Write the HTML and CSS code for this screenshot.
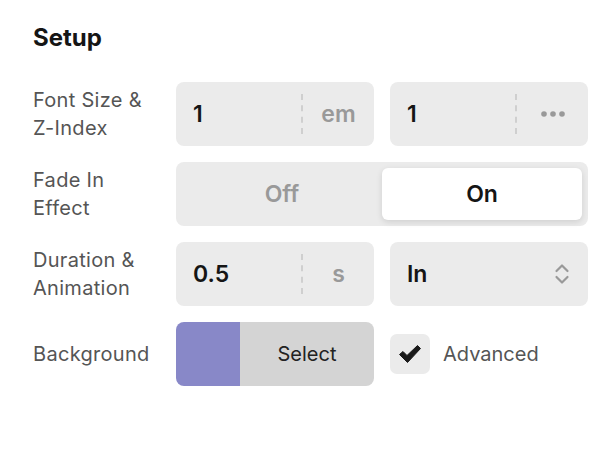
FILE: index.html
```html
<!DOCTYPE html>
<html lang="en">
<head>
<meta charset="utf-8">
<title>Setup</title>
<link rel="stylesheet" href="styles.css">
</head>
<body>
<section class="panel">
  <h2 class="title">Setup</h2>
  <div class="grid">
    <div class="label">Font Size &amp;<br>Z-Index</div>
    <div class="field">
      <span class="value">1</span>
      <span class="unit">em</span>
    </div>
    <div class="field">
      <span class="value">1</span>
      <span class="unit">
        <svg width="24" height="6" viewBox="0 0 24 6"><circle cx="3" cy="3" r="2.8" fill="#999"/><circle cx="12" cy="3" r="2.8" fill="#999"/><circle cx="21" cy="3" r="2.8" fill="#999"/></svg>
      </span>
    </div>

    <div class="label">Fade In<br>Effect</div>
    <div class="toggle span2">
      <span class="opt">Off</span>
      <span class="opt active">On</span>
    </div>

    <div class="label">Duration &amp;<br>Animation</div>
    <div class="field">
      <span class="value">0.5</span>
      <span class="unit">s</span>
    </div>
    <div class="field select">
      <span class="value">In</span>
      <svg class="chev" width="16" height="24" viewBox="0 0 16 24"><path d="M2.5 9 L8 3.5 L13.5 9 M2.5 15 L8 20.5 L13.5 15" fill="none" stroke="#999" stroke-width="2.2" stroke-linecap="round" stroke-linejoin="round"/></svg>
    </div>

    <div class="label">Background</div>
    <div class="color">
      <span class="swatch"></span>
      <span class="color-btn">Select</span>
    </div>
    <label class="check">
      <span class="box">
        <svg width="24" height="20" viewBox="0 0 24 20"><path d="M1.5 10.5 L5 7.5 L9 11.5 L19.5 1.5 L22.5 4.5 L9.5 18.5 Z" fill="#1a1a1a" stroke="#1a1a1a" stroke-width="1" stroke-linejoin="round"/></svg>
      </span>
      <span class="check-text">Advanced</span>
    </label>
  </div>
</section>
</body>
</html>
```
FILE: styles.css
```css
* { box-sizing: border-box; }

html, body {
  margin: 0;
  background: #fff;
}

body {
  font-family: Inter, "Noto Sans", sans-serif;
  color: #1a1a1a;
}

.panel {
  padding: 24px 24px 0 33px;
}

.title {
  margin: 0;
  font-size: 24px;
  font-weight: 700;
  line-height: 28px;
  color: #151515;
}

.grid {
  margin-top: 30px;
  display: grid;
  grid-template-columns: 127px 198px 198px;
  grid-auto-rows: 64px;
  column-gap: 16px;
  row-gap: 16px;
}

.label {
  align-self: center;
  font-size: 20px;
  line-height: 28px;
  letter-spacing: 0.3px;
  color: #555;
}

.field {
  display: flex;
  align-items: center;
  background: #ebebeb;
  border-radius: 8px;
  padding-left: 17px;
}

.value {
  flex: 1;
  font-size: 23px;
  font-weight: 600;
  color: #151515;
}

.unit {
  width: 73px;
  align-self: stretch;
  margin: 12px 0;
  border-left: 2px dashed #cfcfcf;
  display: flex;
  align-items: center;
  justify-content: center;
  font-size: 23px;
  font-weight: 600;
  color: #999;
}

.select {
  padding-right: 18px;
}

.chev { display: block; }

.span2 { grid-column: span 2; }

.toggle {
  display: grid;
  grid-template-columns: 1fr 1fr;
  padding: 6px;
  background: #ebebeb;
  border-radius: 8px;
}

.opt {
  display: flex;
  align-items: center;
  justify-content: center;
  font-size: 23px;
  font-weight: 600;
  color: #999;
  border-radius: 6px;
}

.opt.active {
  background: #fff;
  color: #151515;
  box-shadow: 0 2px 6px rgba(0, 0, 0, 0.12);
}

.color {
  display: flex;
  border-radius: 8px;
  overflow: hidden;
}

.swatch {
  width: 64px;
  background: #8888c8;
}

.color-btn {
  flex: 1;
  display: flex;
  align-items: center;
  justify-content: center;
  background: #d4d4d4;
  font-size: 20px;
  color: #222;
}

.check {
  display: flex;
  align-items: center;
  gap: 13px;
}

.box {
  width: 40px;
  height: 40px;
  border-radius: 7px;
  background: #ebebeb;
  display: flex;
  align-items: center;
  justify-content: center;
}

.check-text {
  font-size: 20px;
  color: #555;
}
```
